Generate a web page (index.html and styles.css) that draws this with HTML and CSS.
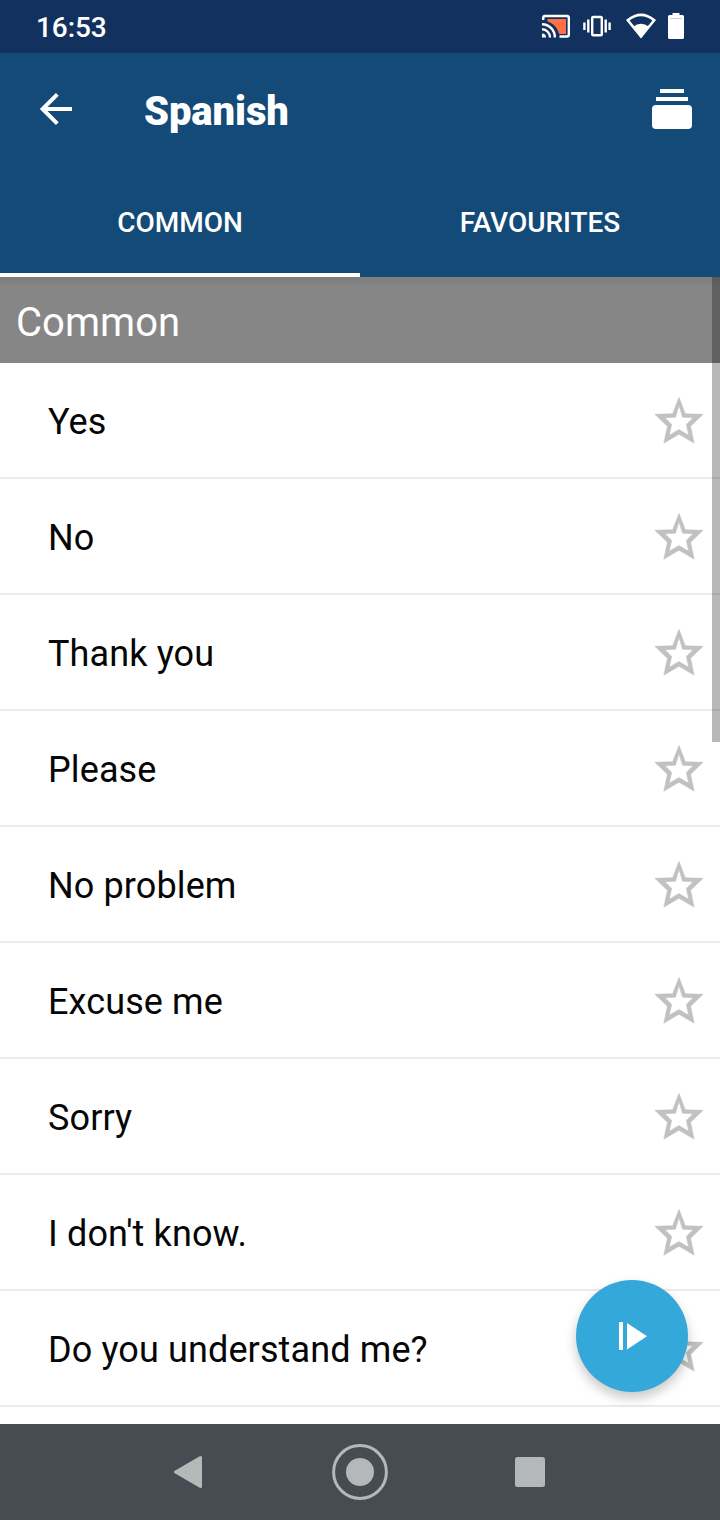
FILE: index.html
```html
<!DOCTYPE html>
<html lang="en">
<head>
<meta charset="utf-8">
<title>Spanish</title>
<link rel="stylesheet" href="styles.css">
</head>
<body>
<svg class="defs" width="0" height="0">
  <symbol id="star" viewBox="0 0 56 56">
    <path fill-rule="evenodd" d="M28 5.200L34.300 21.700L52.200 22.300L39.600 34.300L43.200 51.200L28 42.300L12.800 51.200L16.400 34.300L3.800 22.300L21.700 21.700ZM28 13.500L24.500 25.300L14 25.800L20.700 32.500L18.300 43.200L28 37.500L37.700 43.200L35.300 32.500L42 25.800L31.500 25.300Z"/>
  </symbol>
</svg>
<div class="screen">
  <header class="status">
    <span class="clock">16:53</span>
    <svg class="status-icons" width="150" height="32" viewBox="538 10 150 32" fill="#fff">
      <path d="M547.500 19H566V34H559C558 28 553 23 547.500 21.500Z" fill="#ff7043"/>
      <g fill="none" stroke="#fff" stroke-width="2.4">
        <path d="M543.200 20V18Q543.200 16 545 16H567Q568.800 16 568.800 18V34.500Q568.800 36.500 567 36.500H559.500"/>
        <path d="M542 24.300A12.800 12.800 0 0 1 554.800 37.500M542 29.300A8 8 0 0 1 550 37.500"/>
        <rect x="592.200" y="17" width="9.600" height="18.200" rx="1"/>
        <path d="M588.300 19.500V32.500M584.400 22.500V30M605.700 19.500V32.500M609.600 22.500V30"/>
      </g>
      <path d="M542 33.500A4 4 0 0 1 546 37.500H542Z"/>
      <path d="M627.800 20.300Q641 9.400 654.200 20.300L641 36.500Z" fill="none" stroke="#fff" stroke-width="2.600"/>
      <path d="M633 26.700Q641 21 649 26.700L641 38Z"/>
      <path d="M672.500 13H679.500V15H682.500Q684 15 684 16.500V37.500Q684 39 682.500 39H669.500Q668 39 668 37.500V16.500Q668 15 669.500 15H672.500Z"/>
      <path d="M670 18.500H682" stroke="#9fb0c8" stroke-width=".6"/>
    </svg>
  </header>
  <div class="toolbar">
    <svg class="back" width="34" height="34" viewBox="0 0 34 34"><path d="M33 17H4M18.300 2.300L3.600 17L18.300 31.700" fill="none" stroke="#fff" stroke-width="4"/></svg>
    <h1 class="title">Spanish</h1>
    <svg class="deck" width="40" height="40" viewBox="0 0 40 40" fill="#fff"><path d="M8 0H32V4H8ZM4 8H36V12H4Z"/><rect y="16" width="40" height="24" rx="4"/></svg>
  </div>
  <nav class="tabs">
    <div class="tab active">COMMON</div>
    <div class="tab">FAVOURITES</div>
  </nav>
  <main class="content">
    <h2 class="section">Common</h2>
    <ul class="list">
      <li class="row"><span>Yes</span><svg class="star"><use href="#star"/></svg></li>
      <li class="row"><span>No</span><svg class="star"><use href="#star"/></svg></li>
      <li class="row"><span>Thank you</span><svg class="star"><use href="#star"/></svg></li>
      <li class="row"><span>Please</span><svg class="star"><use href="#star"/></svg></li>
      <li class="row"><span>No problem</span><svg class="star"><use href="#star"/></svg></li>
      <li class="row"><span>Excuse me</span><svg class="star"><use href="#star"/></svg></li>
      <li class="row"><span>Sorry</span><svg class="star"><use href="#star"/></svg></li>
      <li class="row"><span>I don't know.</span><svg class="star"><use href="#star"/></svg></li>
      <li class="row"><span>Do you understand me?</span><svg class="star"><use href="#star"/></svg></li>
    </ul>
    <div class="scrollbar"></div>
    <div class="fab"><svg width="28" height="28" viewBox="0 0 28 28" fill="#fff"><path d="M0 0H4V28H0ZM8 1V27.500L28 14.200Z"/></svg></div>
  </main>
  <footer class="navbar">
    <svg width="30" height="34" viewBox="0 0 30 34"><path d="M2.500 17L27.500 2.500V31.500Z" fill="#b4b8b9" stroke="#b4b8b9" stroke-width="3" stroke-linejoin="round"/></svg>
    <svg class="home" width="56" height="56" viewBox="0 0 56 56"><circle cx="28" cy="28" r="26.400" fill="none" stroke="#b4b8b9" stroke-width="3"/><circle cx="28" cy="28" r="14" fill="#b4b8b9"/></svg>
    <svg width="30" height="30" viewBox="0 0 30 30"><rect width="30" height="30" rx="2.500" fill="#b4b8b9"/></svg>
  </footer>
</div>
</body>
</html>
```

FILE: styles.css
```css
* { box-sizing: border-box; }
body { margin: 0; font-family: Roboto, "Liberation Sans", sans-serif; }
svg { display: block; flex: none; }
.defs { position: absolute; }
.screen { width: 720px; height: 1520px; display: flex; flex-direction: column; background: #fff; overflow: hidden; }
.status { height: 53px; background: #13315f; color: #fff; display: flex; justify-content: space-between; align-items: flex-start; padding: 10px 32px 0 36px; }
.clock { font-size: 28px; font-weight: 500; line-height: 35px; letter-spacing: -.1px; }
.toolbar { height: 112px; background: #144a78; color: #fff; display: flex; align-items: center; padding: 0 28px 0 39px; }
.title { margin: 6px 0 0 71px; font-size: 40px; line-height: 48px; font-weight: 900; letter-spacing: -.1px; flex: 1; }
.tabs { height: 112px; background: #144a78; color: #fff; display: flex; }
.tab { flex: 1; text-align: center; font-size: 28px; font-weight: 500; line-height: 115px; height: 112px; letter-spacing: -.05px; }
.active { border-bottom: 4px solid #fff; }
.content { position: relative; height: 1147px; }
.section { margin: 0; height: 86px; padding: 6px 16px 0; font-size: 40px; font-weight: 400; line-height: 80px; letter-spacing: .05px; color: #fff; background: linear-gradient(#7d7d7d, #868686 10px); }
.list { list-style: none; margin: 0; padding: 0; }
.row { height: 116px; border-bottom: 2px solid #ebebeb; padding: 0 13px 0 48px; display: flex; align-items: center; justify-content: space-between; font-size: 36px; letter-spacing: .12px; color: #060606; }
.row span { line-height: 42px; padding-top: 4px; }
.star { width: 56px; height: 56px; fill: #c1c1c1; stroke: #c1c1c1; stroke-width: .5px; }
.scrollbar { position: absolute; top: 0; right: 0; width: 8px; height: 465px; background: rgba(0,0,0,.28); }
.fab { position: absolute; left: 576px; top: 1003px; width: 112px; height: 112px; padding-left: 2px; border-radius: 50%; background: #35a8da; box-shadow: 0 6px 12px rgba(0,0,0,.22); display: flex; align-items: center; justify-content: center; }
.navbar { height: 96px; background: #454d52; display: flex; align-items: center; justify-content: space-between; padding: 0 175px 0 173px; }
.home { margin-left: 2px; }
```
